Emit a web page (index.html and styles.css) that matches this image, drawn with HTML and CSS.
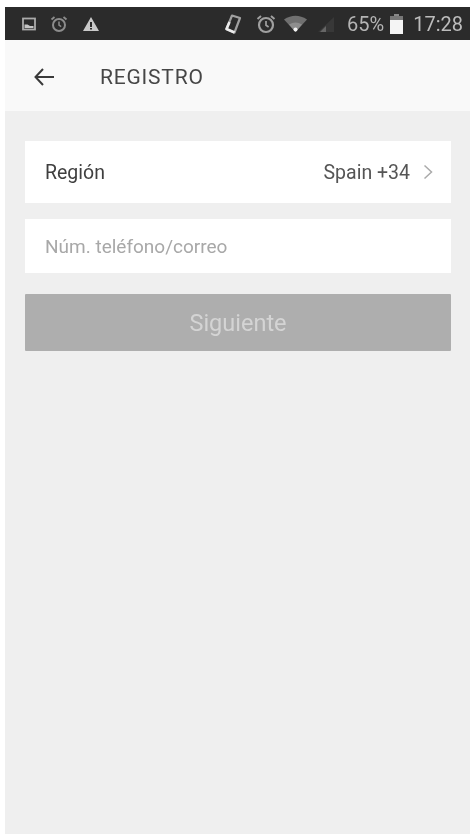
FILE: index.html
```html
<!DOCTYPE html>
<html lang="es">
<head>
<meta charset="utf-8">
<title>Registro</title>
<link rel="stylesheet" href="styles.css">
</head>
<body>
<div class="phone">
  <div class="status">
    <div class="status-group">
      <svg class="ico" width="14" height="14" viewBox="0 0 14 14"><rect x="1" y="1.500" width="12" height="11" fill="none" stroke="#aaa" stroke-width="1.800"/><path d="M2.500 11V7.500h3l2.500 1.500h3.500v2z" fill="#c4c4c4"/></svg>
      <svg class="ico" width="18" height="18" viewBox="0 0 18 18"><circle cx="9" cy="10" r="6" fill="none" stroke="#8c8c8c" stroke-width="2"/><path d="M9 6.500v3.700l2.200 1.400" fill="none" stroke="#8c8c8c" stroke-width="1.500"/><path d="M1.500 4.500 4.500 2M16.500 4.500 13.500 2" stroke="#8c8c8c" stroke-width="1.800"/></svg>
      <svg class="ico" width="18" height="16" viewBox="0 0 18 16"><path fill-rule="evenodd" d="M9 1l8 14H1zM8 6v5h2V6zm0 6v1.500h2V12z" fill="#c9c9c9"/></svg>
    </div>
    <div class="status-group right">
      <svg class="ico" width="18" height="22" viewBox="0 0 18 22"><path d="M8 2.500 16 5 10.500 19.500 2.500 16z" fill="none" stroke="#a0a0a0" stroke-width="2.200" stroke-linejoin="round"/><path d="M5.500 9 2.500 16l8 3.500" fill="none" stroke="#ececec" stroke-width="2.600" stroke-linejoin="round"/></svg>
      <svg class="ico alarm" width="20" height="20" viewBox="0 0 20 20"><circle cx="10" cy="11" r="7" fill="none" stroke="#a0a0a0" stroke-width="2.200"/><path d="M10 7v4.300l2.600 1.700" fill="none" stroke="#a0a0a0" stroke-width="1.700"/><path d="M1.500 5 5 2M18.500 5 15 2" stroke="#a0a0a0" stroke-width="2"/></svg>
      <svg class="ico wifi" width="25" height="20" viewBox="0 0 25 20"><path d="M1 5.500Q12.500-2 24 5.500L12.500 18z" fill="#707070"/><path d="M6 10.500Q12.500 6.500 19 10.500L12.500 18z" fill="#8e8e8e"/><circle cx="12.500" cy="15.500" r="2" fill="#f2f2f2"/></svg>
      <svg class="ico signal" width="18" height="18" viewBox="0 0 18 18"><path d="M1 17 17 2v15z" fill="#383838"/><path d="M3 17l6-6v6z" fill="#666"/></svg>
      <span class="pct">65%</span>
      <svg class="ico batt" width="13" height="20" viewBox="0 0 13 20"><path d="M4 0h5v2H4z" fill="#888"/><path d="M0 2h13v5H0z" fill="#777"/><path d="M0 6h13v14H0z" fill="#f4f4f4"/></svg>
      <span class="time">17:28</span>
    </div>
  </div>
  <header class="bar">
    <svg class="back" width="22" height="20" viewBox="0 0 22 20"><path d="M21 10H2.500M10 2 2.500 10l7.500 8" fill="none" stroke="#3a3a3a" stroke-width="2"/></svg>
    <span class="title">REGISTRO</span>
  </header>
  <main class="content">
    <div class="row region">
      <span class="label">Región</span>
      <span class="value">Spain +34</span>
      <svg class="chev" width="10" height="16" viewBox="0 0 10 16"><path d="M1.500 1.500 8.500 8l-7 6.500" fill="none" stroke="#aaa" stroke-width="1.500"/></svg>
    </div>
    <div class="row phone-field">Núm. teléfono/correo</div>
    <div class="next">Siguiente</div>
  </main>
</div>
</body>
</html>
```
FILE: styles.css
```css
* { box-sizing: border-box; }
html, body { margin: 0; height: 100%; background: #fff; }
body { padding: 7px 3px 0 5px; font-family: Roboto, "Liberation Sans", sans-serif; overflow: hidden; }
.phone { height: 827px; background: #efefef; display: flex; flex-direction: column; filter: blur(.5px); }
.status { height: 33px; background: #2b2b2b; display: flex; align-items: center; justify-content: space-between; padding: 0 7px 0 17px; flex: none; }
.status-group { display: flex; align-items: center; gap: 14px; }
.status-group.right { gap: 0; }
.ico { display: block; flex: none; }
.alarm { margin-left: 14px; }
.wifi { margin-left: 7px; }
.signal { margin-left: 9px; }
.pct { margin-left: 12px; font-size: 20px; color: #b4b4b4; }
.batt { margin-left: 6px; }
.time { margin-left: 10px; font-size: 20px; color: #bcbcbc; }
.bar { height: 71px; background: #f9f9f9; display: flex; align-items: center; flex: none; padding: 3px 0 0 28px; }
.title { margin-left: 45px; font-size: 21px; color: #464646; letter-spacing: .8px; }
.content { padding: 30px 19px 0 20px; display: flex; flex-direction: column; }
.row { background: #fff; display: flex; align-items: center; padding: 0 0 0 20px; }
.region { height: 62px; padding-right: 18px; }
.label { font-size: 19.500px; color: #3f3f3f; flex: 1; }
.value { font-size: 19.500px; color: #555; }
.chev { margin-left: 13px; }
.phone-field { height: 54px; margin-top: 16px; font-size: 19px; color: #a8a8a8; }
.next { height: 57px; margin-top: 21px; background: #aeaeae; color: #d4d4d4; font-size: 23.500px; display: flex; align-items: center; justify-content: center; border-radius: 1px; }
```
